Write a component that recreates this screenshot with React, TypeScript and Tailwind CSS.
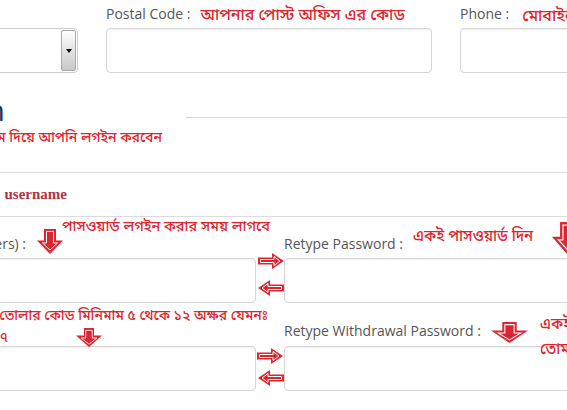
import React from "react";

const RED = "#dc2530";

function RightArrow({ flip = false }: { flip?: boolean }) {
  return (
    <svg width="26" height="16" viewBox="0 0 26 16">
      <g transform={flip ? "translate(26 0) scale(-1 1)" : undefined}>
        <path d="M0 4.5H14V0L26 8L14 16V11.5H0Z" fill={RED} />
        <path d="M2.5 6.5H16V3.5L22 8L16 12.5V9.5H2.5Z" fill="none" stroke="#fff" strokeWidth="1" />
      </g>
    </svg>
  );
}

function DownArrow({ w, h }: { w: number; h: number }) {
  return (
    <svg width={w} height={h} viewBox="0 0 26 26" preserveAspectRatio="none">
      <path d="M7 0H19V12H26L13 26L0 12H7Z" fill={RED} />
      <path d="M9.5 2.5H16.5V14.5H20.5L13 22L5.5 14.5H9.5Z" fill="none" stroke="#fff" strokeWidth="1" />
    </svg>
  );
}

function WideDownArrow({ w, h }: { w: number; h: number }) {
  return (
    <svg width={w} height={h} viewBox="0 0 36 20" preserveAspectRatio="none">
      <path d="M11 0H25V8H36L18 20L0 8H11Z" fill={RED} />
      <path d="M13.5 2.5H22.5V10.5H29L18 17L7 10.5H13.5Z" fill="none" stroke="#fff" strokeWidth="1" />
    </svg>
  );
}

const bn = { fontFamily: '"Noto Sans Bengali", "Noto Sans", sans-serif', color: RED };

function Input() {
  return <div className="h-[45px] rounded-[4px] border border-[#d4d4d4] bg-white shadow-[inset_0_1px_1px_rgba(0,0,0,0.05)]" />;
}

export default function App() {
  return (
    <div
      className="relative h-[410px] w-[567px] overflow-hidden bg-white text-[14px] text-[#555]"
      style={{ fontFamily: '"Open Sans", sans-serif' }}
    >
      <div className="relative ml-[-248px] w-[1036px]">
        {/* Row 1 */}
        <div className="grid grid-cols-[326px_326px_326px] gap-x-[28px] pt-[4px]">
          <div>
            <div className="mb-[4px] h-5 leading-5">Country :</div>
            <div className="flex h-[45px] justify-end rounded-[4px] border border-[#ccc] bg-white p-px">
              <div className="flex w-[15px] items-center justify-center rounded-[2px] border border-[#a8a8a8] bg-gradient-to-b from-white to-[#c8c8c8]">
                <div className="h-0 w-0 border-l-[3px] border-r-[3px] border-t-[4px] border-l-transparent border-r-transparent border-t-black" />
              </div>
            </div>
          </div>
          <div>
            <div className="mb-[4px] flex h-5 items-center leading-5">
              <span>Postal Code :</span>
              <span className="ml-[10px] mt-[4px] whitespace-nowrap text-[16px] font-medium" style={bn}>
                আপনার পোস্ট অফিস এর কোড
              </span>
            </div>
            <Input />
          </div>
          <div>
            <div className="mb-[4px] flex h-5 items-center leading-5">
              <span>Phone :</span>
              <span className="ml-[13px] mt-[5px] whitespace-nowrap text-[16px] font-medium" style={bn}>
                মোবাইল নাম্বার
              </span>
            </div>
            <Input />
          </div>
        </div>

        {/* Heading */}
        <div className="flex h-[45px] items-end">
          <div className="mb-[-7px] w-[253px] whitespace-nowrap text-right text-[30px] leading-none text-[#1a3655]">
            Login Information
          </div>
          <div className="ml-[181px] flex-1 border-b border-[#d8d8d8]" />
        </div>

        {/* Red hint row */}
        <div className="h-[55px] border-b border-[#dcdcdc] pt-[10px]">
          <div className="w-[410px] whitespace-nowrap text-right text-[14px] font-medium leading-[22px]" style={bn}>
            ইউজারনেম দিয়ে আপনি লগইন করবেন
          </div>
        </div>

        {/* Username row */}
        <div className="flex h-[44px] items-center border-b border-[#dcdcdc]">
          <div
            className="w-[315px] whitespace-nowrap text-right text-[15px] font-bold text-[#b0333f]"
            style={{ fontFamily: '"Liberation Serif", serif' }}
          >
            username
          </div>
        </div>

        {/* Row 2 */}
        <div className="grid grid-cols-[504px_504px] gap-x-[28px]">
          <div>
            <div className="mb-[4px] w-[274px] whitespace-nowrap pt-[17px] text-right leading-5">
              Password (Minimum 5 characters) :
            </div>
            <Input />
          </div>
          <div>
            <div className="mb-[4px] whitespace-nowrap pt-[17px] leading-5">Retype Password :</div>
            <Input />
          </div>
        </div>

        {/* Row 3 */}
        <div className="grid grid-cols-[504px_504px] gap-x-[28px]">
          <div>
            <div className="mb-[5px] h-[38px]" />
            <Input />
          </div>
          <div>
            <div className="mb-[5px] whitespace-nowrap pt-[18px] leading-5">Retype Withdrawal Password :</div>
            <Input />
          </div>
        </div>

        {/* Annotation overlays */}
        <div className="absolute left-[310px] top-[217px] whitespace-nowrap text-[14.5px] font-medium leading-[22px]" style={bn}>
          পাসওয়ার্ড লগইন করার সময় লাগবে
        </div>
        <div className="absolute left-[285px] top-[229px]">
          <DownArrow w={26} h={25} />
        </div>
        <div className="absolute left-[661px] top-[226px] whitespace-nowrap text-[15px] font-medium leading-[22px]" style={bn}>
          একই পাসওয়ার্ড দিন
        </div>
        <div className="absolute left-[800px] top-[222px]">
          <DownArrow w={30} h={32} />
        </div>
        <div className="absolute left-[506px] top-[253px]">
          <RightArrow />
        </div>
        <div className="absolute left-[506px] top-[280px]">
          <RightArrow flip />
        </div>

        <div className="absolute left-0 top-[306px] w-[516px] whitespace-nowrap text-right text-[14px] font-medium leading-[22px]" style={bn}>
          টাকা তোলার কোড মিনিমাম ৫ থেকে ১২ অক্ষর যেমনঃ
        </div>
        <div className="absolute left-0 top-[328px] w-[256px] whitespace-nowrap text-right text-[14px] font-medium leading-[22px]" style={bn}>
          ১২৩৪৫৬৭
        </div>
        <div className="absolute left-[324px] top-[328px]">
          <WideDownArrow w={26} h={19} />
        </div>
        <div className="absolute left-[739px] top-[322px]">
          <WideDownArrow w={37} h={21} />
        </div>
        <div className="absolute left-[788px] top-[314px] whitespace-nowrap text-[15px] font-medium leading-[22px]" style={bn}>
          একই কোড দিন
        </div>
        <div className="absolute left-[788px] top-[339px] whitespace-nowrap text-[15px] font-medium leading-[22px]" style={bn}>
          তোমার কোড
        </div>
        <div className="absolute left-[505px] top-[348px]">
          <RightArrow />
        </div>
        <div className="absolute left-[506px] top-[370px]">
          <RightArrow flip />
        </div>
      </div>
    </div>
  );
}
